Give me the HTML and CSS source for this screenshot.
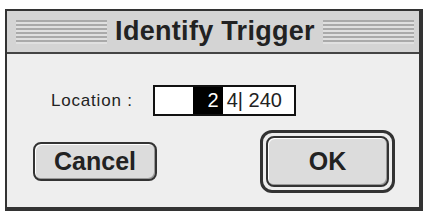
FILE: index.html
```html
<!DOCTYPE html>
<html lang="en">

<head>
  <meta charset="UTF-8" />
  <title>Identify Trigger</title>
  <link rel="stylesheet" href="styles.css">
</head>

<body>
  <div class="dialog">
    <div class="titlebar">
      <div class="stripes"></div>
      <h1>Identify Trigger</h1>
      <div class="stripes"></div>
    </div>
    <div class="content">
      <div class="row">
        <span class="label">Location :</span>
        <div class="field"><span class="blank"></span><span class="sel">2</span><span class="rest">4| 240</span></div>
      </div>
      <div class="buttons">
        <button class="btn cancel">Cancel</button>
        <div class="default-ring"><button class="btn ok">OK</button></div>
      </div>
    </div>
  </div>
</body>

</html>
```

FILE: styles.css
```css
body {
  margin: 0;
  padding: 0;
  background: #fff;
  font-family: "Liberation Sans", Arial, sans-serif;
}

.dialog {
  margin: 9px 0 0 5px;
  width: 412px;
  height: 196px;
  border: 2px solid #333;
  border-right-width: 4px;
  border-bottom-width: 4px;
  background: #eeeeee;
  display: flex;
  flex-direction: column;
}

.titlebar {
  height: 41px;
  background: #d4d4d4;
  border-bottom: 2px solid #444;
  display: flex;
  align-items: center;
  padding: 0 5px 0 9px;
  gap: 8px;
}

.titlebar h1 {
  margin: 0;
  font-size: 27px;
  font-weight: bold;
  color: #222;
  white-space: nowrap;
  letter-spacing: 0.3px;
}

.stripes {
  flex: 1;
  height: 24px;
  background: repeating-linear-gradient(to bottom, #aaa 0, #aaa 2px, #e0e0e0 2px, #e0e0e0 4px);
}

.content {
  flex: 1;
  padding: 31px 0 0 0;
}

.row {
  display: flex;
  align-items: center;
  padding-left: 44px;
  gap: 20px;
}

.label {
  font-size: 17px;
  color: #222;
  letter-spacing: 0.8px;
}

.field {
  width: 139px;
  height: 27px;
  border: 2px solid #111;
  background: #fff;
  display: flex;
  align-items: center;
  font-size: 20px;
  color: #222;
}

.blank {
  width: 38px;
}

.sel {
  background: #000;
  color: #fff;
  height: 27px;
  width: 30px;
  text-align: right;
  line-height: 27px;
  padding-right: 4px;
  box-sizing: border-box;
}

.rest {
  padding-left: 4px;
  white-space: nowrap;
}

.buttons {
  display: flex;
  align-items: center;
  justify-content: space-between;
  padding: 14px 24px 0 26px;
}

.btn {
  font-family: "Liberation Sans", Arial, sans-serif;
  font-weight: bold;
  font-size: 25px;
  color: #222;
  background: #dcdcdc;
  border: 2px solid #333;
  border-radius: 8px;
  box-shadow: inset -1px -1px 0 #999, inset 1px 1px 0 #fff;
}

.cancel {
  width: 124px;
  height: 39px;
}

.default-ring {
  border: 3px solid #333;
  border-radius: 12px;
  padding: 3px;
  background: #eee;
}

.ok {
  width: 123px;
  height: 51px;
}
```
